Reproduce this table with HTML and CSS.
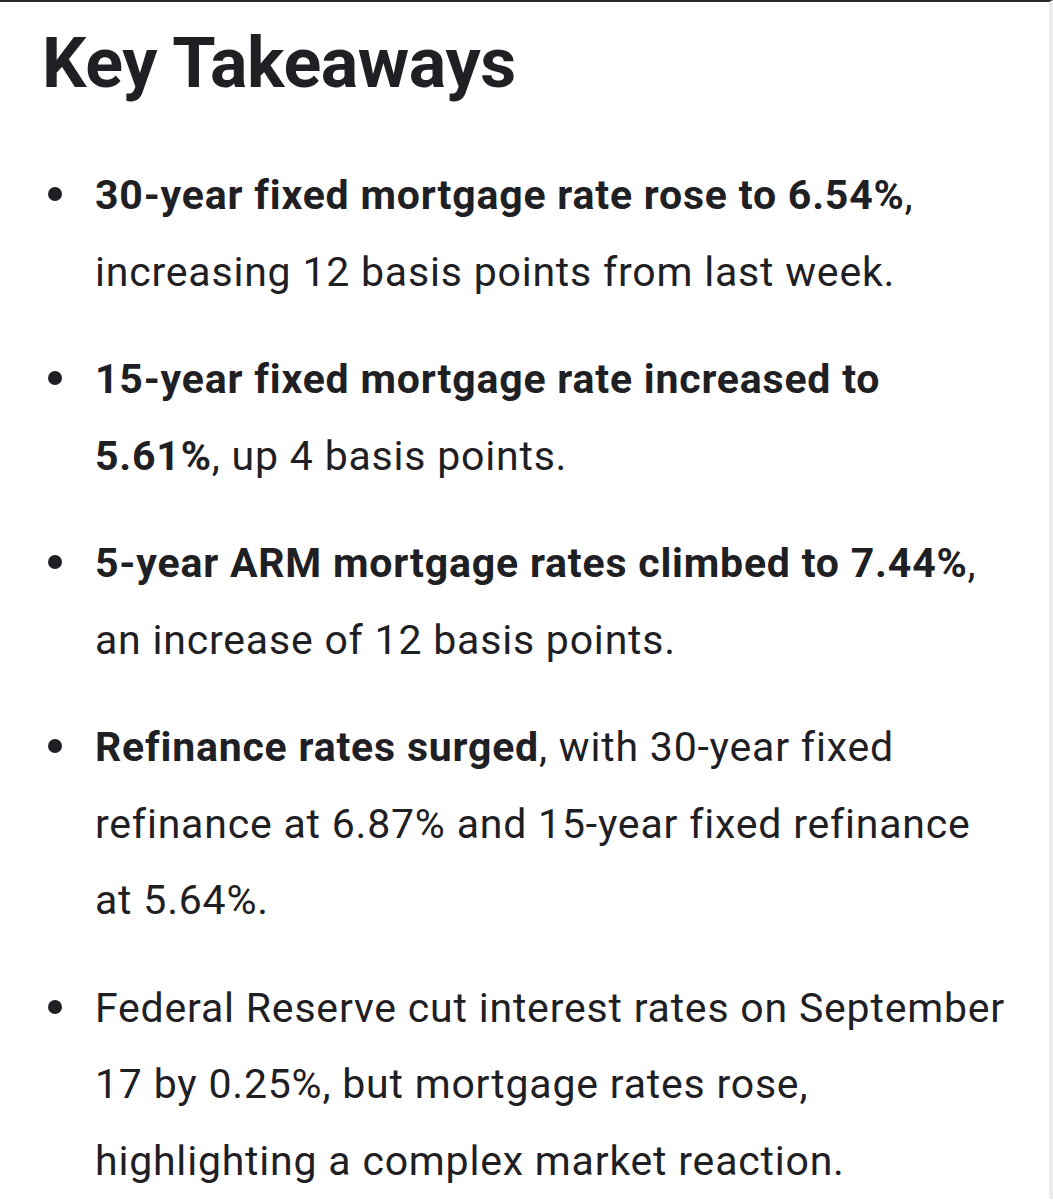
FILE: index.html
```html
<!DOCTYPE html>
<html lang="en">
<head>
<meta charset="utf-8">
<title>Key Takeaways</title>
<link rel="stylesheet" href="styles.css">
</head>
<body>
<div class="page">
  <h1 class="title">Key Takeaways</h1>
  <ul class="takeaways">
    <li class="item"><span class="dot"></span><p class="text"><strong>30-year fixed mortgage rate rose to 6.54%</strong>,<br>increasing 12 basis points from last week.</p></li>
    <li class="item"><span class="dot"></span><p class="text"><strong>15-year fixed mortgage rate increased to<br>5.61%</strong>, up 4 basis points.</p></li>
    <li class="item"><span class="dot"></span><p class="text"><strong>5-year ARM mortgage rates climbed to 7.44%</strong>,<br>an increase of 12 basis points.</p></li>
    <li class="item"><span class="dot"></span><p class="text"><strong>Refinance rates surged</strong>, with 30-year fixed<br>refinance at 6.87% and 15-year fixed refinance<br>at 5.64%.</p></li>
    <li class="item"><span class="dot"></span><p class="text">Federal Reserve cut interest rates on September<br>17 by 0.25%, but mortgage rates rose,<br>highlighting a complex market reaction.</p></li>
  </ul>
</div>
</body>
</html>
```

FILE: styles.css
```css
html, body {
  margin: 0;
  padding: 0;
  background: #ffffff;
}
body {
  font-family: Roboto, "Noto Sans", "Liberation Sans", sans-serif;
  color: #1f2024;
}
.page {
  border-top: 2px solid #2b2b2b;
  border-right: 4px solid #ececec;
  min-height: 1198px;
  box-sizing: border-box;
  padding: 19px 0 0 42px;
}
.title {
  margin: 0;
  font-size: 70px;
  line-height: 84px;
  font-weight: 700;
  letter-spacing: -0.4px;
}
.takeaways {
  list-style: none;
  margin: 52px 0 0 0;
  padding: 0;
}
.item {
  display: grid;
  grid-template-columns: 53px 1fr;
  margin-bottom: 31px;
}
.dot {
  width: 14px;
  height: 14px;
  border-radius: 50%;
  background: #1f2024;
  margin: 30px 0 0 6px;
}
.text {
  margin: 0;
  font-size: 41px;
  line-height: 76.5px;
  letter-spacing: 0.8px;
  white-space: nowrap;
}
.text strong {
  font-weight: 700;
}
```
